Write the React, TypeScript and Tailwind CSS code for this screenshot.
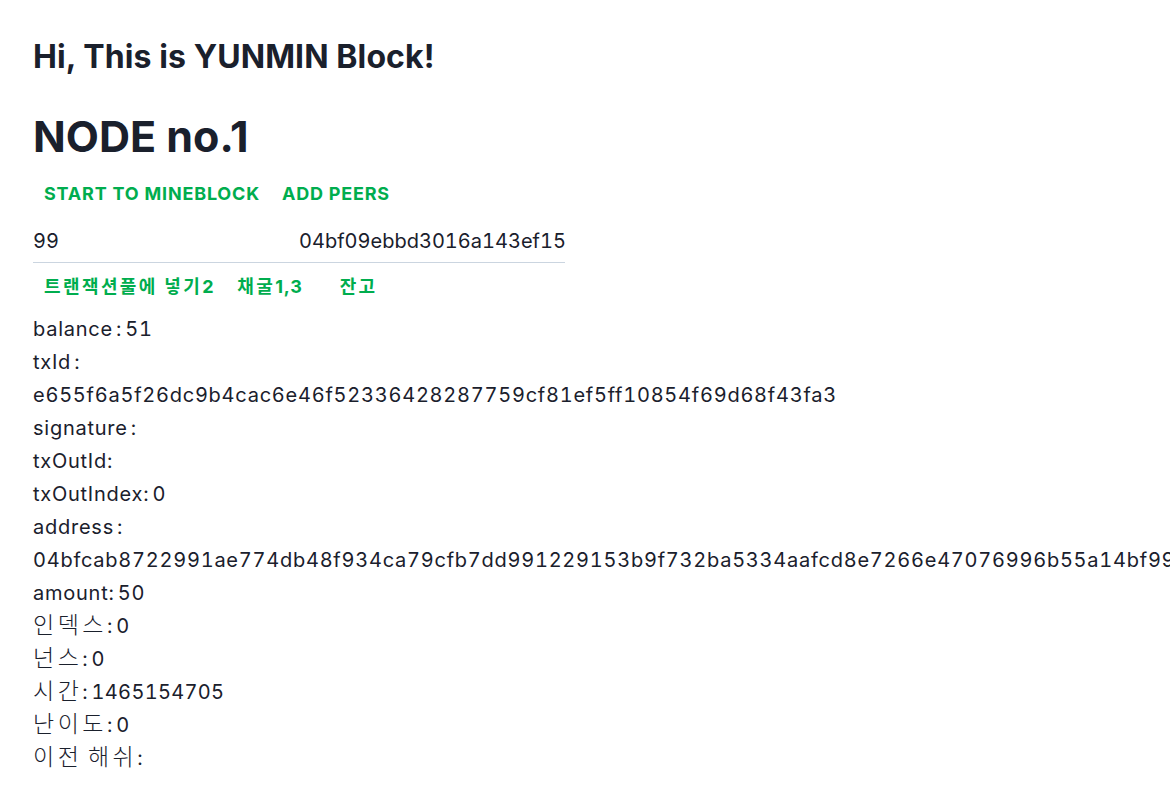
import React from "react";

const font = { fontFamily: 'Inter, "Noto Sans CJK KR", sans-serif' };

function K({ children }: { children: React.ReactNode }) {
  return (
    <span
      className="text-[23px] font-light tracking-[3.5px] leading-none"
      style={{ fontFamily: '"Noto Sans CJK KR", sans-serif' }}
    >
      {children}
    </span>
  );
}

function KB({ children }: { children: React.ReactNode }) {
  return (
    <span className="tracking-[2.4px]" style={{ fontFamily: '"Noto Sans CJK KR", sans-serif' }}>
      {children}
    </span>
  );
}

export default function App() {
  const lines: React.ReactNode[] = [
    "balance : 51",
    "txId :",
    "e655f6a5f26dc9b4cac6e46f52336428287759cf81ef5ff10854f69d68f43fa3",
    "signature :",
    "txOutId:",
    "txOutIndex: 0",
    "address :",
    "04bfcab8722991ae774db48f934ca79cfb7dd991229153b9f732ba5334aafcd8e7266e47076996b55a14bf99132a1d5e0c7f1f1b6f3e2d4c5b6a79",
    "amount: 50",
    <><K>인덱스</K>: 0</>,
    <><K>넌스</K>: 0</>,
    <><K>시간</K>: <span className="tracking-[0.3px]">1465154705</span></>,
    <><K>난이도</K>: 0</>,
    <><K>이전 해쉬</K>:</>,
  ];
  return (
    <div
      className="w-[1170px] h-[810px] overflow-hidden bg-white text-[#1a202c] pl-[33px] pt-[36px]"
      style={font}
    >
      <h2 className="text-[32px] font-bold leading-[42px] tracking-[0.1px]">Hi, This is YUNMIN Block!</h2>
      <h1 className="mt-[31px] text-[43px] font-bold leading-[54px]">NODE no.1</h1>
      <div className="mt-[10px] flex h-10 items-center text-[18px] font-bold text-[#00ad4e] tracking-[0.8px]">
        <button className="px-[11px] h-10">START TO MINEBLOCK</button>
        <button className="px-[11px] h-10">ADD PEERS</button>
      </div>
      <div className="w-[532px] overflow-hidden border-b border-[#cbd5e0] mt-[7px]">
        <div className="grid grid-cols-2 h-[42px] items-center text-[20px] whitespace-nowrap tabular-nums">
          <div className="overflow-hidden">99</div>
          <div className="overflow-hidden">04bf09ebbd3016a143ef15c2ad4f7b83</div>
        </div>
      </div>
      <div className="flex items-center gap-[1px] h-[46px] text-[18px] font-bold text-[#00ad4e] tracking-[0.8px]">
        <button className="px-[11px] h-10"><KB>트랜잭션풀에 넣기</KB>2</button>
        <button className="px-[11px] h-10"><KB>채굴</KB>1,3</button>
        <button className="ml-[14px] px-[11px] h-10"><KB>잔고</KB></button>
      </div>
      <div className="mt-[4px] text-[20px] leading-[33px] whitespace-nowrap tabular-nums tracking-[0.75px] [word-spacing:-3px]">
        {lines.map((l, i) => (
          <div key={i} className="h-[33px]">{l}</div>
        ))}
      </div>
    </div>
  );
}
